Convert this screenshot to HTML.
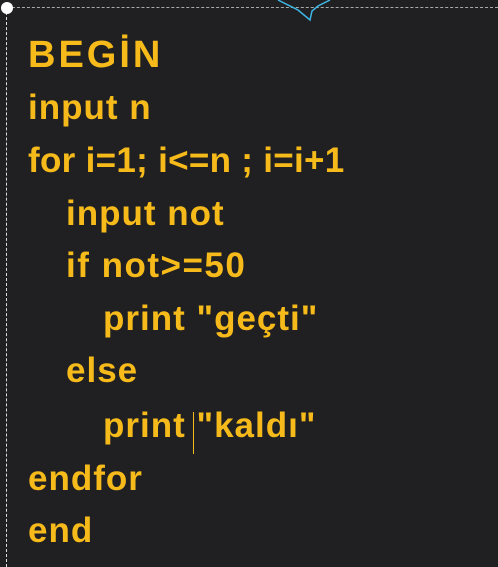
<!DOCTYPE html>
<html><head><style>
body{margin:0;width:498px;height:567px;background:#202022;overflow:hidden;position:relative;font-family:"Liberation Sans",sans-serif;}
.t{position:absolute;top:7px;left:7px;right:0;border-top:1px dashed #aaa;}
.l{position:absolute;top:7px;bottom:0;left:6px;border-left:1px dashed #ddd;}
.dot{position:absolute;left:1px;top:2px;width:12px;height:12px;border-radius:50%;background:#fff;}
.ln{position:absolute;color:#f6bb1a;font-size:35px;font-weight:bold;line-height:40px;white-space:nowrap;letter-spacing:1px;}
</style></head><body>
<div class="t"></div><div class="l"></div><div class="dot"></div>
<svg style="position:absolute;left:270px;top:0" width="70" height="25"><path d="M8 0 Q20 6 28 10 L40 20 L42 11 L48 6 L60 0" stroke="#3fb6e6" stroke-width="1.5" fill="none"/></svg>
<div class="ln" style="left:28px;top:35px;font-size:38px;letter-spacing:3px">BEGİN</div>
<div class="ln" style="left:28px;top:88px">input n</div>
<div class="ln" style="left:28px;top:141px;letter-spacing:0.3px">for i=1; i&lt;=n ; i=i+1</div>
<div class="ln" style="left:66px;top:194px">input not</div>
<div class="ln" style="left:66px;top:246px;letter-spacing:1.5px">if not&gt;=50</div>
<div class="ln" style="left:103px;top:299px">print "geçti"</div>
<div class="ln" style="left:66px;top:351px">else</div>
<div class="ln" style="left:103px;top:406px">print "kaldı"</div>
<div style="position:absolute;left:193px;top:412px;width:1px;height:42px;background:#f6bb1a"></div>
<div class="ln" style="left:28px;top:459px">endfor</div>
<div class="ln" style="left:28px;top:511px">end</div>
</body></html>
